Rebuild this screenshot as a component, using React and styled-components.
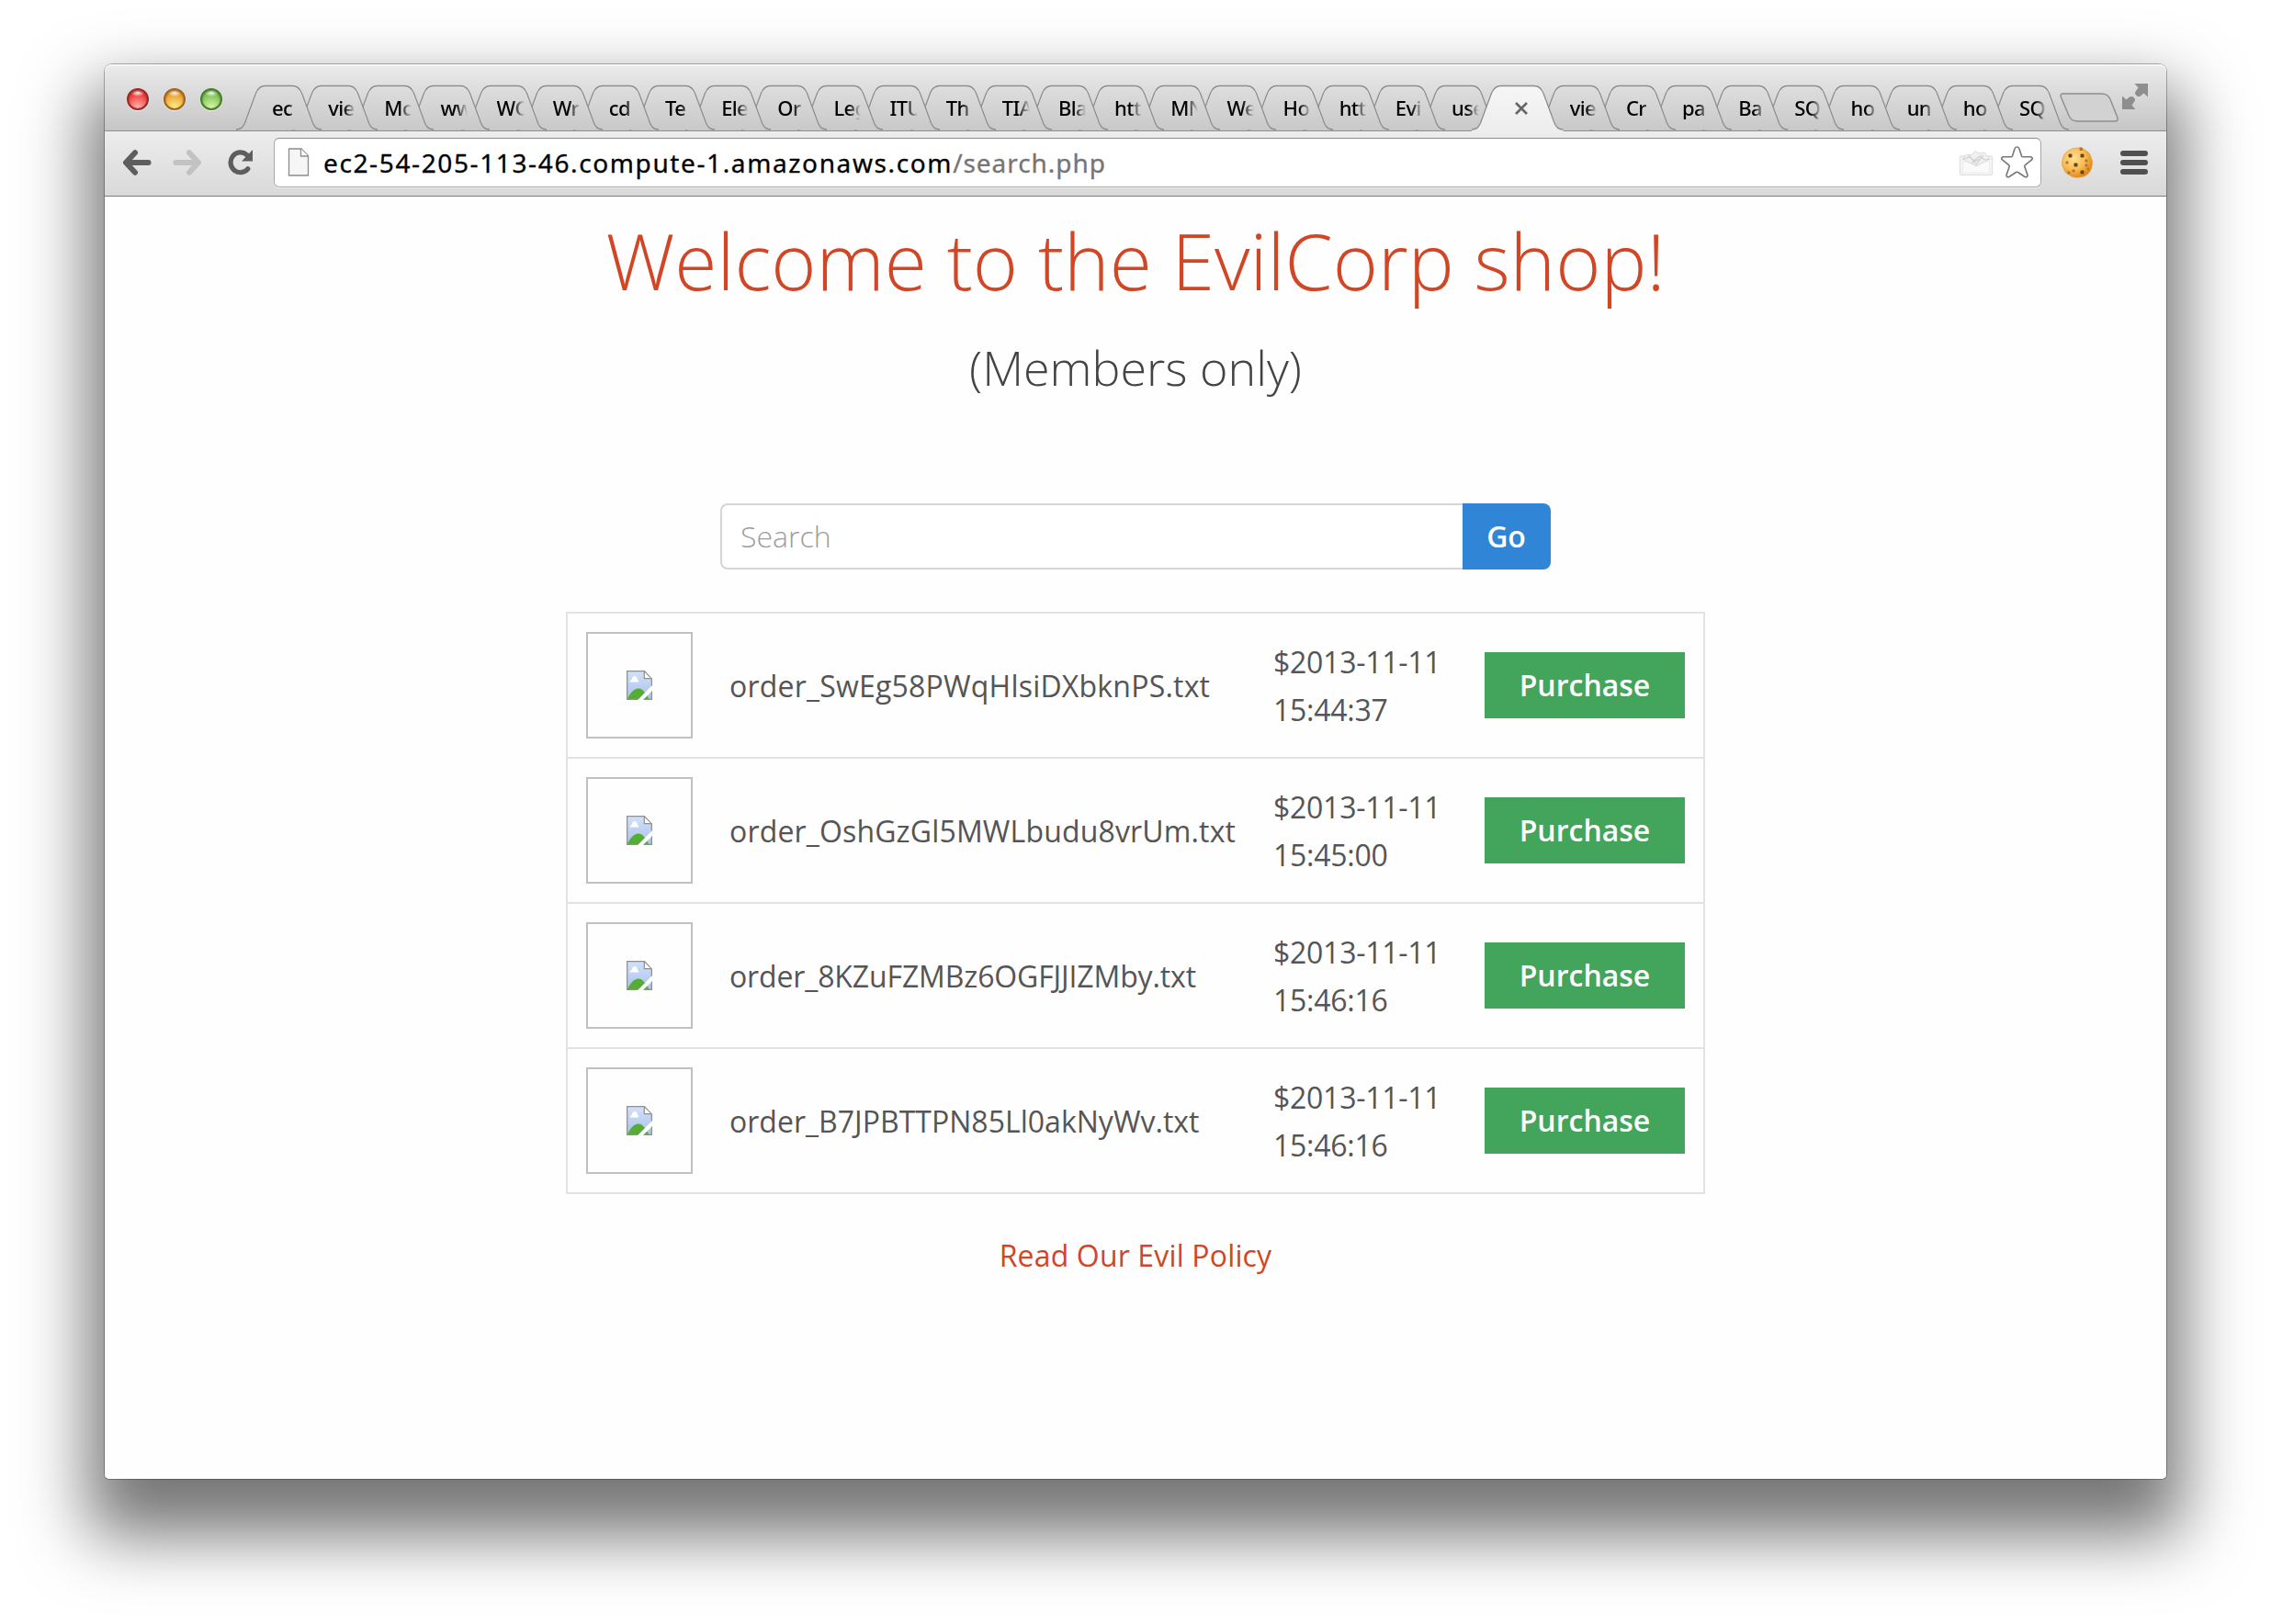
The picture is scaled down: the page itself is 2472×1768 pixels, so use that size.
import React from "react";
import styled, { createGlobalStyle } from "styled-components";

const Global = createGlobalStyle`
  * { box-sizing: border-box; }
  body { margin: 0; background: #fff; overflow: hidden; }
`;

const Desktop = styled.div`
  width: 2472px;
  height: 1768px;
  padding: 70px 114px 158px;
  background: #fff;
  font-family: "Open Sans", "Liberation Sans", sans-serif;
`;

const Window = styled.div`
  width: 2244px;
  height: 1540px;
  display: flex;
  flex-direction: column;
  border-radius: 8px 8px 5px 5px;
  background: #fff;
  box-shadow: 0 0 0 1px rgba(0, 0, 0, 0.27), 0 44px 72px 18px rgba(0, 0, 0, 0.54);
`;

const TabStrip = styled.div`
  height: 73px;
  display: flex;
  align-items: flex-end;
  border-radius: 8px 8px 0 0;
  border-bottom: 1px solid #8f8f8f;
  padding-bottom: 1px;
  background: linear-gradient(#ebebeb, #c6c6c7);
  box-shadow: inset 0 2px 0 #f5f5f5;
  isolation: isolate;
`;

const Lights = styled.div`
  align-self: flex-start;
  display: flex;
  gap: 16px;
  width: 143px;
  flex: none;
  padding: 26px 0 0 24px;
`;

const Light = styled.span`
  width: 24px;
  height: 24px;
  flex: none;
  border-radius: 50%;
  border: 2px solid ${(p) => p.$edge};
  background: radial-gradient(ellipse 7px 4px at 50% 14%, rgba(255, 255, 255, 0.95), rgba(255, 255, 255, 0.1) 100%, transparent),
    radial-gradient(circle at 50% 95%, ${(p) => p.$glow}, ${(p) => p.$fill} 65%);
  box-shadow: 0 1px 1px rgba(255, 255, 255, 0.6), inset 0 1px 2px ${(p) => p.$edge};
`;

const Tab = styled.div`
  position: relative;
  flex: none;
  width: ${(p) => (p.$active ? 67.7 : 61.15)}px;
  height: ${(p) => (p.$active ? 50 : 48)}px;
  padding: 11px 0 0 39px;
  z-index: ${(p) => p.$z};
  margin-bottom: ${(p) => (p.$active ? -2 : 0)}px;
`;

const TabShape = styled.svg`
  position: absolute;
  left: 0;
  top: 0;
  overflow: visible;
`;

const TabTitle = styled.div`
  position: relative;
  width: max-content;
  white-space: nowrap;
  font: 500 22px/26px "Noto Sans", sans-serif;
  letter-spacing: -0.6px;
  color: #000;
  mask-image: linear-gradient(90deg, #000 17px, transparent 30px);
`;

const CloseIcon = styled.svg`
  position: relative;
  display: block;
  margin: 7px 0 0 8px;
`;

const NewTab = styled.svg`
  flex: none;
  margin: 0 0 8px 22px;
`;

const FullScreen = styled.svg`
  flex: none;
  margin: 0 0 22px 4px;
`;

const Toolbar = styled.div`
  height: 71px;
  flex: none;
  display: flex;
  align-items: center;
  padding: 0 20px 2px 19px;
  border-bottom: 1px solid #7d7d7d;
  background: linear-gradient(#ededed, #d9d9d9);
`;

const NavIcon = styled.svg`
  flex: none;
  margin-right: ${(p) => p.$gap}px;
`;

const Omnibox = styled.div`
  width: 1924px;
  height: 54px;
  flex: none;
  display: flex;
  align-items: center;
  padding: 0 8px 0 14px;
  border: 1px solid #a9a9a9;
  border-top-color: #8b8b8b;
  border-radius: 6px;
  background: #fff;
  box-shadow: 0 1px 0 #f0f0f0;
`;

const BarIcon = styled.svg`
  flex: none;
  margin-left: ${(p) => p.$before || 0}px;
`;

const Url = styled.div`
  flex: 1;
  margin-left: 15px;
  font: 400 28px/40px "Noto Sans", sans-serif;
  letter-spacing: 1.62px;
  color: #000;
  white-space: nowrap;
  -webkit-text-stroke: 0.3px currentColor;
`;

const UrlPath = styled.span`
  letter-spacing: 0.95px;
  color: #757575;
`;

const Page = styled.main`
  flex: 1;
  display: flex;
  flex-direction: column;
  align-items: center;
  border-radius: 0 0 5px 5px;
  background: #fefefe;
`;

const Title = styled.h1`
  margin: 16px 0 0;
  font-weight: 300;
  font-size: 84px;
  line-height: 107px;
  color: #d14624;
  white-space: nowrap;
`;

const Subtitle = styled.h2`
  margin: 22px 0 0;
  font-weight: 300;
  font-size: 52px;
  line-height: 81px;
  color: #444;
`;

const SearchForm = styled.div`
  margin-top: 108px;
  display: flex;
  width: 904px;
  height: 72px;
`;

const SearchField = styled.div`
  flex: 1;
  padding-left: 20px;
  border: 2px solid #d5d5d5;
  border-right: 0;
  border-radius: 8px 0 0 8px;
  background: #fff;
  font-size: 32px;
  font-weight: 300;
  line-height: 67px;
  color: #9c9c9c;
`;

const Button = styled.button`
  width: ${(p) => (p.$go ? 96 : 218)}px;
  height: 72px;
  flex: none;
  padding: 0 ${(p) => (p.$go ? 1 : 0)}px 1px 0;
  border: 0;
  border-radius: ${(p) => (p.$go ? "0 8px 8px 0" : 0)};
  background: ${(p) => (p.$go ? "#3085d6" : "#43a45b")};
  color: #fff;
  font: 600 32px/71px "Open Sans", sans-serif;
`;

const Items = styled.div`
  width: 1240px;
  margin-top: 46px;
  border: 2px solid #e3e3e3;
`;

const Item = styled.div`
  display: grid;
  grid-template-columns: 116px 632px 230px 218px;
  align-items: center;
  height: ${(p) => (p.$last ? 156 : 158)}px;
  padding: 0 20px;
  border-bottom: ${(p) => (p.$last ? 0 : 2)}px solid #e3e3e3;
  font-size: 32px;
  line-height: 52px;
  color: #555;
`;

const Thumb = styled.div`
  width: 116px;
  height: 116px;
  display: grid;
  place-items: center;
  border: 2px solid silver;
`;

const Name = styled.div`
  padding: 2px 0 0 40px;
  letter-spacing: ${(p) => p.$track}px;
`;

const Price = styled.div`
  padding-top: 2px;
  letter-spacing: -0.26px;
`;

const Policy = styled.a`
  margin-top: 41px;
  font-size: 32px;
  line-height: 52px;
  letter-spacing: 0.15px;
  color: #d14624;
`;

const tabs = ["ec", "vie", "Mc", "ww", "WC", "Wr", "cd", "Te", "Ele", "Or", "Leg", "ITU", "Th", "TIA", "Bla", "htt", "MN", "We", "Ho", "htt", "Evi", "use", null, "vie", "Cr", "pa", "Ba", "SQ", "ho", "un", "ho", "SQ"];

const items = [
  { name: "order_SwEg58PWqHlsiDXbknPS.txt", time: "15:44:37", track: 0.21 },
  { name: "order_OshGzGl5MWLbudu8vrUm.txt", time: "15:45:00", track: 0.16 },
  { name: "order_8KZuFZMBz6OGFJJIZMby.txt", time: "15:46:16", track: -0.13 },
  { name: "order_B7JPBTTPN85Ll0akNyWv.txt", time: "15:46:16", track: 0.02 },
];

function BrowserTab({ title, index }) {
  const active = title === null;
  const w = active ? 99.5 : 93;
  const path = `M0 48 C5 48 7 46 9.5 41 L21.5 8.5 C24 2.5 27 .5 31.5 .5 H${w - 31.5} C${w - 27} .5 ${w - 24} 2.5 ${w - 21.5} 8.5 L${w - 9.5} 41 C${w - 7} 46 ${w - 5} 48 ${w} 48`;
  return (
    <Tab $active={active} $z={active ? 50 : 40 - index}>
      <TabShape width={w} height="50">
        <defs>
          <linearGradient id={"tab" + index} x1="0" y1="0" x2="0" y2="1">
            <stop offset="0" stopColor={active ? "#f6f6f6" : "#dededf"} />
            <stop offset="1" stopColor={active ? "#ededed" : "#c9c9ca"} />
          </linearGradient>
        </defs>
        <path d={active ? path + " V50 H0 Z" : path} fill={`url(#tab${index})`} />
        <path d={path} transform="translate(0 1.3)" fill="none" stroke="#fff" strokeOpacity=".4" clipPath="inset(0 0 10px 0)" />
        <path d={path} fill="none" stroke="#8d8d8d" strokeWidth="1.3" />
      </TabShape>
      {active ? (
        <CloseIcon width="14" height="14" viewBox="0 0 14 14">
          <path d="M1 1 13 13M13 1 1 13" stroke="#666" strokeWidth="2.6" />
        </CloseIcon>
      ) : (
        <TabTitle>{title}</TabTitle>
      )}
    </Tab>
  );
}

function Cookie() {
  const chips = [[9, 9, 4], [22, 9, 4], [15, 19, 4], [22, 27, 4], [6, 17, 3], [27, 15, 3], [27, 20, 3], [13, 26, 3], [8, 28, 3], [21, 2, 3.5], [29, 24, 2.5]];
  return (
    <BarIcon $before={21} width="36" height="36" viewBox="0 0 36 36">
      <defs>
        <radialGradient id="dough" cx=".38" cy=".35" r=".68">
          <stop offset="0" stopColor="#ffdf8f" />
          <stop offset=".55" stopColor="#f8bd57" />
          <stop offset="1" stopColor="#e18512" />
        </radialGradient>
      </defs>
      <path d="M18 2Q23 1 27 4.500Q32 7 33 12Q35.500 17 34 22Q33 28 29 31Q25 34.500 20 34Q14 35 10 32Q4 29 3 24Q.5 20 2 15Q3 9 7 6Q12 2 18 2Z" fill="url(#dough)" stroke="#e7a040" strokeWidth=".8" />
      {chips.map(([x, y, s]) => (
        <rect key={x + "-" + y} x={x - 0.5} y={y - 0.5} width={s} height={s} rx="1" fill={s === 4 ? "#6b4518" : "#b0762c"} />
      ))}
    </BarIcon>
  );
}

function BrokenImage() {
  return (
    <svg width="28" height="32" viewBox="0 0 28 32">
      <defs>
        <linearGradient id="sky" x1="0" y1="0" x2="0" y2="1">
          <stop offset="0" stopColor="#d3e1fa" />
          <stop offset="1" stopColor="#a9c1ec" />
        </linearGradient>
        <clipPath id="sheet"><path d="M0 0H20L28 9V16L12 32H0Z M28 22V32H18Z" /></clipPath>
      </defs>
      <g clipPath="url(#sheet)">
        <path d="M0 0H20L28 9V32H0Z" fill="url(#sky)" />
        <path d="M3.500 12.500Q3.500 10.500 5.500 10Q6.500 6 8.800 6Q11.500 6 12 10Q13.500 10.500 13 12.500Z" fill="#fff" />
        <path d="M1 31C3.500 25 8 19.500 13 19.500C18 19.500 21.500 26 24.500 31Z" fill="#55ad33" />
        <path d="M.6.6H19.500L27.400 9V31.300H.6Z" fill="none" stroke="#909090" strokeWidth="1.3" />
        <path d="M19.300.6V8.700H27.400Z" fill="#fff" stroke="#909090" strokeWidth="1.2" />
      </g>
    </svg>
  );
}

export default function App() {
  return (
    <Desktop>
      <Global />
      <Window>
        <TabStrip>
          <Lights>
            <Light $edge="#9a2a2a" $fill="#f0433d" $glow="#ffb5b0" />
            <Light $edge="#a0651c" $fill="#eba437" $glow="#fff08a" />
            <Light $edge="#4b7d2c" $fill="#82c45a" $glow="#d8f7a8" />
          </Lights>
          {tabs.map((t, i) => <BrowserTab key={i} title={t} index={i} />)}
          <NewTab width="64" height="32" viewBox="0 0 64 32">
            <path d="M3.500 1H45C51 1 53 3 55 7L62.500 26C64 30 62.500 31 60 31H20C14 31 12 29 10 25L1.500 5C.5 2 1.500 1 3.500 1Z" fill="#d2d2d3" stroke="#8d8d8d" strokeWidth="1.4" />
          </NewTab>
          <FullScreen width="28" height="28" viewBox="0 0 28 28" fill="#8e8e8e">
            <path d="M13.500 0H28V14.500L23.500 10.500L20 13.500Q17 15 15 12.500Q13 10.500 15 8L17.500 4.500Z" />
            <path d="M14.500 28H0V13.500L4.500 17.500L8 14.500Q11 13 13 15.500Q15 17.500 13 20L10.500 23.500Z" />
          </FullScreen>
        </TabStrip>
        <Toolbar>
          <NavIcon $gap={23} width="32" height="28" viewBox="0 0 32 28" fill="none" stroke="#5e5e5e" strokeWidth="6" strokeLinecap="round" strokeLinejoin="round">
            <path d="M28.500 14H5M14 3.200 4 14 14 24.800" />
          </NavIcon>
          <NavIcon $gap={28} width="32" height="28" viewBox="0 0 32 28" fill="none" stroke="#c2c2c2" strokeWidth="6" strokeLinecap="round" strokeLinejoin="round">
            <path d="M3.500 14H27M18 3.200 28 14 18 24.800" />
          </NavIcon>
          <NavIcon $gap={22} width="28" height="28" viewBox="0 0 28 28">
            <path d="M21.800 20.800A10.600 10.900 0 1 1 20.500 5.500" fill="none" stroke="#5e5e5e" strokeWidth="5.200" strokeLinecap="round" />
            <path d="M27 0V12.500H15Z" fill="#5e5e5e" />
          </NavIcon>
          <Omnibox>
            <BarIcon width="24" height="32" viewBox="0 0 24 32">
              <path d="M1.500 1H15L22.500 8.500V30H1.500Z" fill="#f6f6f6" stroke="#8c8c8c" strokeWidth="1.3" />
              <path d="M14.500 1V9H22.500" fill="#fff" stroke="#8c8c8c" strokeWidth="1.3" />
            </BarIcon>
            <Url>ec2-54-205-113-46.compute-1.amazonaws.com<UrlPath>/search.php</UrlPath></Url>
            <BarIcon width="38" height="32" viewBox="0 0 38 32">
              <rect x="1.500" y="9" width="35" height="20.500" rx="2" fill="#f7f7f7" stroke="#e2e2e2" strokeWidth="1.5" />
              <rect x="4.500" y="15" width="29" height="12" fill="#fafafa" stroke="#ececec" />
              <path d="M4 12 9 7 14 8 18 3.500 23 6 28 5 34 12 19 20Z" fill="#f0f0f0" stroke="#dcdcdc" />
              <path d="M4 12.500 12 10 17 14 23 9 28 13 34 12.500M11 8 19 18 27 8M14 16 24 12" fill="none" stroke="#cfcfcf" strokeWidth="1.200" />
            </BarIcon>
            <BarIcon $before={7} width="36" height="36" viewBox="0 0 36 36">
              <path d="M18.500 1Q20.500 1 21 3L23.500 10.800Q24 11.800 25 11.800H33.500Q36.500 13 34.500 15L27.500 20.500Q26.500 21.500 27 23L30 31.500Q30 34.500 27 33.500L19.500 28.500Q18.500 28 17.500 28.500L10 33.500Q7 34.500 7 31.500L10 23Q10.500 21.500 9.500 20.500L2.500 15Q.5 13 3.500 11.800H12Q13 11.800 13.500 10.800L16 3Q16.500 1 18.500 1Z" fill="#fff" stroke="#777" strokeWidth="1.600" />
            </BarIcon>
          </Omnibox>
          <Cookie />
          <BarIcon $before={29} width="30" height="26" viewBox="0 0 30 26" fill="#505050">
            <rect width="30" height="6" rx="3" />
            <rect y="10" width="30" height="6" rx="3" />
            <rect y="20" width="30" height="6" rx="3" />
          </BarIcon>
        </Toolbar>
        <Page>
          <Title>Welcome to the EvilCorp shop!</Title>
          <Subtitle>(Members only)</Subtitle>
          <SearchForm>
            <SearchField>Search</SearchField>
            <Button $go>Go</Button>
          </SearchForm>
          <Items>
            {items.map(({ name, time, track }, i) => (
              <Item key={name} $last={i === items.length - 1}>
                <Thumb><BrokenImage /></Thumb>
                <Name $track={track}>{name}</Name>
                <Price>$2013-11-11<br />{time}</Price>
                <Button>Purchase</Button>
              </Item>
            ))}
          </Items>
          <Policy>Read Our Evil Policy</Policy>
        </Page>
      </Window>
    </Desktop>
  );
}
